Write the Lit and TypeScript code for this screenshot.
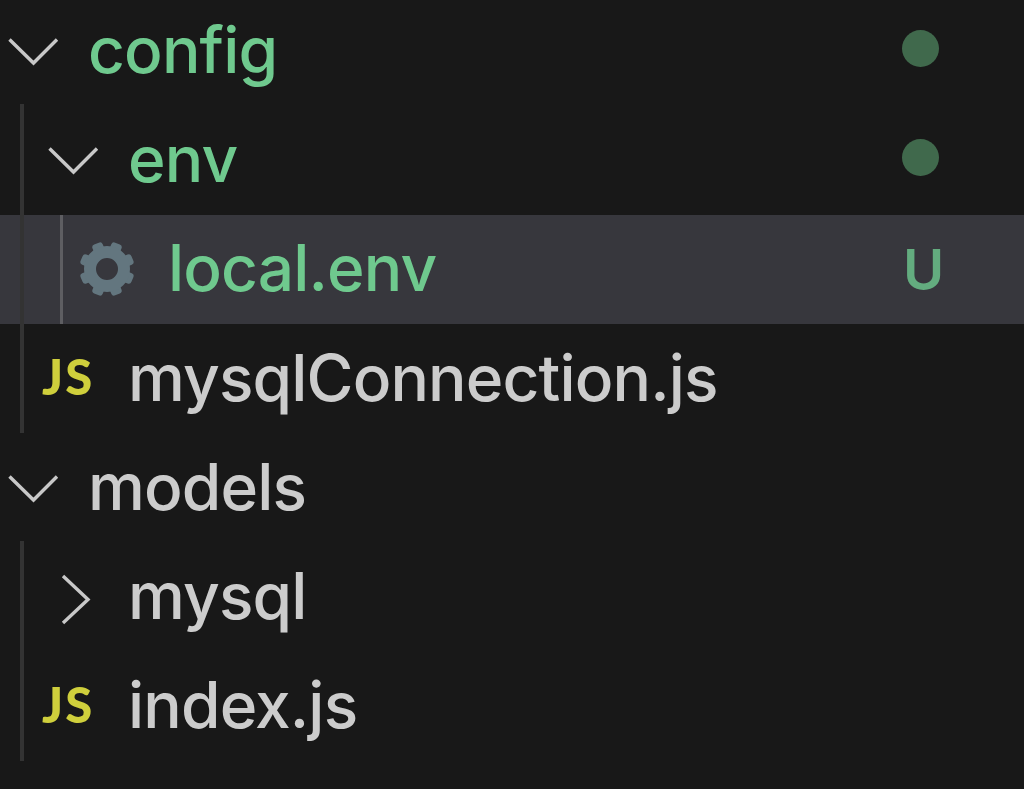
import { LitElement, html, css, svg } from "lit";
import { customElement } from "lit/decorators.js";

const chevDown = html`<svg class="chev" viewBox="0 0 60 40"><path d="M9.500 9.500 L33.500 33 L57 9.500" fill="none" stroke="#c8c8c8" stroke-width="3.400"/></svg>`;
const chevRight = html`<svg class="chev" viewBox="0 0 60 60"><path d="M23 7 L48 30.500 L23 54" fill="none" stroke="#c8c8c8" stroke-width="3.400"/></svg>`;
const gearTeeth = [0, 45, 90, 135, 180, 225, 270, 315].map(
  (a) => svg`<rect x="22.500" y="0.500" width="11" height="12" rx="3" fill="#63767f" transform="rotate(${a + 22.5} 28 28)"/>`
);
const gear = html`<svg class="gear" viewBox="0 0 56 56">${gearTeeth}<circle cx="28" cy="28" r="17" fill="none" stroke="#63767f" stroke-width="12"/></svg>`;

@customElement("app-root")
export class AppRoot extends LitElement {
  static styles = css`
    :host {
      display: block;
      width: 1024px;
      height: 789px;
      overflow: hidden;
      background: #181818;
      font-family: Inter, "Liberation Sans", sans-serif;
      font-size: 64px;
      font-weight: 450;
      color: #cccccc;
    }
    .tree { margin-top: -4px; }
    .row {
      position: relative;
      display: flex;
      align-items: center;
      height: 109.300px;
      white-space: nowrap;
    }
    .slot { flex: none; width: 70px; height: 60px; display: flex; align-items: center; }
    .d0 { padding-left: 20px; }
    .d1 { padding-left: 60px; }
    .d2 { padding-left: 100px; }
    .chev { width: 60px; height: 40px; margin-left: -20px; margin-top: -2px; }
    .right { height: 60px; }
    .right .chev { height: 60px; margin-left: -20px; margin-top: 0; }
    .name { flex: 1; letter-spacing: -0.850px; line-height: 1; margin-left: -2px; margin-top: -2px; }
    .green { color: #6fc98e; }
    .selected { background: #37373d; }
    .selected::before {
      content: "";
      position: absolute;
      left: 60px;
      top: 0;
      bottom: 0;
      width: 3px;
      background: #5e5e62;
    }
    .group { position: relative; }
    .group::before {
      content: "";
      position: absolute;
      left: 20px;
      top: -1px;
      bottom: 0;
      width: 4px;
      background: #333333;
      z-index: 1;
    }
    .gear { width: 56px; height: 56px; margin-left: -21px; margin-top: -1px; }
    .js {
      font-family: Lato, sans-serif;
      font-weight: 900;
      font-size: 49px;
      color: #cfcf3c;
      letter-spacing: 2px;
      margin-left: -18px;
      margin-top: -5px;
    }
    .dot {
      flex: none;
      width: 37px;
      height: 37px;
      border-radius: 50%;
      background: #40694c;
      margin-right: 85px;
      margin-top: -5px;
    }
    .badge {
      flex: none;
      width: 40px;
      margin-right: 81px;
      font-size: 56px;
      font-weight: 600;
      color: #63ac7f;
      text-align: center;
      line-height: 1;
      margin-top: 2px;
    }
  `;

  render() {
    return html`<div class="tree">
      <div class="row d0">
        <span class="slot">${chevDown}</span>
        <span class="name green">config</span>
        <span class="dot"></span>
      </div>
      <div class="group">
        <div class="row d1">
          <span class="slot">${chevDown}</span>
          <span class="name green">env</span>
          <span class="dot"></span>
        </div>
        <div class="row d2 selected">
          <span class="slot">${gear}</span>
          <span class="name green">local.env</span>
          <span class="badge">U</span>
        </div>
        <div class="row d1">
          <span class="slot"><span class="js">JS</span></span>
          <span class="name">mysqlConnection.js</span>
        </div>
      </div>
      <div class="row d0">
        <span class="slot">${chevDown}</span>
        <span class="name">models</span>
      </div>
      <div class="group">
        <div class="row d1">
          <span class="slot"><span class="right">${chevRight}</span></span>
          <span class="name">mysql</span>
        </div>
        <div class="row d1">
          <span class="slot"><span class="js">JS</span></span>
          <span class="name">index.js</span>
        </div>
      </div>
    </div>`;
  }
}
